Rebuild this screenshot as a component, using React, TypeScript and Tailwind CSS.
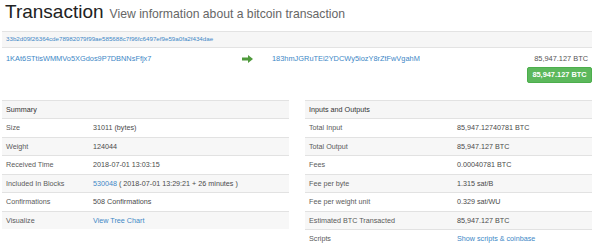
import React from "react";

const link = "text-[#3d87c6]";

function Row({
  label,
  children,
  striped,
  labelW,
}: {
  label: string;
  children: React.ReactNode;
  striped?: boolean;
  labelW: string;
}) {
  return (
    <div
      className={`flex items-center h-[18.5px] border-t border-[#e2e2e2] ${
        striped ? "bg-[#f7f7f7]" : "bg-white"
      }`}
    >
      <div className={`${labelW} pl-[4px] text-[#5a5a5a]`}>{label}</div>
      <div className="flex-1 text-[#4a4a4a]">{children}</div>
    </div>
  );
}

export default function App() {
  return (
    <div className="w-[600px] h-[251px] bg-white overflow-hidden font-['Liberation_Sans',Arial,sans-serif] text-[#333]">
      <div className="pl-[5px] pt-[3px] flex items-baseline gap-[6px] leading-[18px] h-[21px]">
        <span className="text-[19px] text-[#222]">Transaction</span>
        <span className="text-[12.2px] text-[#666]">
          View information about a bitcoin transaction
        </span>
      </div>

      <div className="ml-[2px] w-[590px] mt-[10px]">
        <div className="h-[17px] border-y border-[#e3e3e3] bg-[#f6f6f6] flex items-center pl-[4px] text-[6.2px] leading-none">
          <span className={link}>
            33b2d09f26364cde78982079f99ae585688c7f96fc6497ef9e59a0fa2f434dae
          </span>
        </div>

        <div className="flex pt-[6px] text-[7.4px] leading-[10px]">
          <div className="w-[240px] pl-[4px]">
            <span className={link}>1KAt6STtisWMMVo5XGdos9P7DBNNsFfjx7</span>
          </div>
          <div className="w-[30px] pt-[1px]">
            <svg width="11" height="8" viewBox="0 0 11 8">
              <path d="M0 2.5 H6 V0 L11 4 L6 8 V5.5 H0 Z" fill="#4f9a3c" />
            </svg>
          </div>
          <div className="flex-1">
            <span className={link}>183hmJGRuTEi2YDCWy5iozY8rZtFwVgahM</span>
          </div>
          <div className="flex flex-col items-end pr-[4px]">
            <span className="text-[#555]">85,947.127 BTC</span>
          </div>
        </div>
        <div className="flex justify-end mt-[3px]">
          <div className="h-[16px] w-[65px] rounded-[2px] bg-[#5cb85c] border border-[#4cae4c] text-white font-bold text-[7.4px] flex items-center justify-center">
            85,947.127 BTC
          </div>
        </div>
      </div>

      <div className="ml-[2px] w-[590px] mt-[17px] flex justify-between text-[7.2px] leading-none">
        <div className="w-[287px]">
          <div className="flex items-center h-[18px] border-t border-[#e2e2e2] bg-[#f6f6f6] pl-[4px] text-[#333]">
            Summary
          </div>
          <Row label="Size" labelW="w-[91px]">31011 (bytes)</Row>
          <Row label="Weight" labelW="w-[91px]" striped>
            124044
          </Row>
          <Row label="Received Time" labelW="w-[91px]">
            2018-07-01 13:03:15
          </Row>
          <Row label="Included In Blocks" labelW="w-[91px]" striped>
            <span className={link}>530048</span> ( 2018-07-01 13:29:21 + 26
            minutes )
          </Row>
          <Row label="Confirmations" labelW="w-[91px]">
            508 Confirmations
          </Row>
          <Row label="Visualize" labelW="w-[91px]" striped>
            <span className={link}>View Tree Chart</span>
          </Row>
        </div>

        <div className="w-[287px]">
          <div className="flex items-center h-[18px] border-t border-[#e2e2e2] bg-[#f6f6f6] pl-[4px] text-[#333]">
            Inputs and Outputs
          </div>
          <Row label="Total Input" labelW="w-[152px]">
            85,947.12740781 BTC
          </Row>
          <Row label="Total Output" labelW="w-[152px]" striped>
            85,947.127 BTC
          </Row>
          <Row label="Fees" labelW="w-[152px]">
            0.00040781 BTC
          </Row>
          <Row label="Fee per byte" labelW="w-[152px]" striped>
            1.315 sat/B
          </Row>
          <Row label="Fee per weight unit" labelW="w-[152px]">
            0.329 sat/WU
          </Row>
          <Row label="Estimated BTC Transacted" labelW="w-[152px]" striped>
            85,947.127 BTC
          </Row>
          <Row label="Scripts" labelW="w-[152px]">
            <span className={link}>Show scripts &amp; coinbase</span>
          </Row>
        </div>
      </div>
    </div>
  );
}
